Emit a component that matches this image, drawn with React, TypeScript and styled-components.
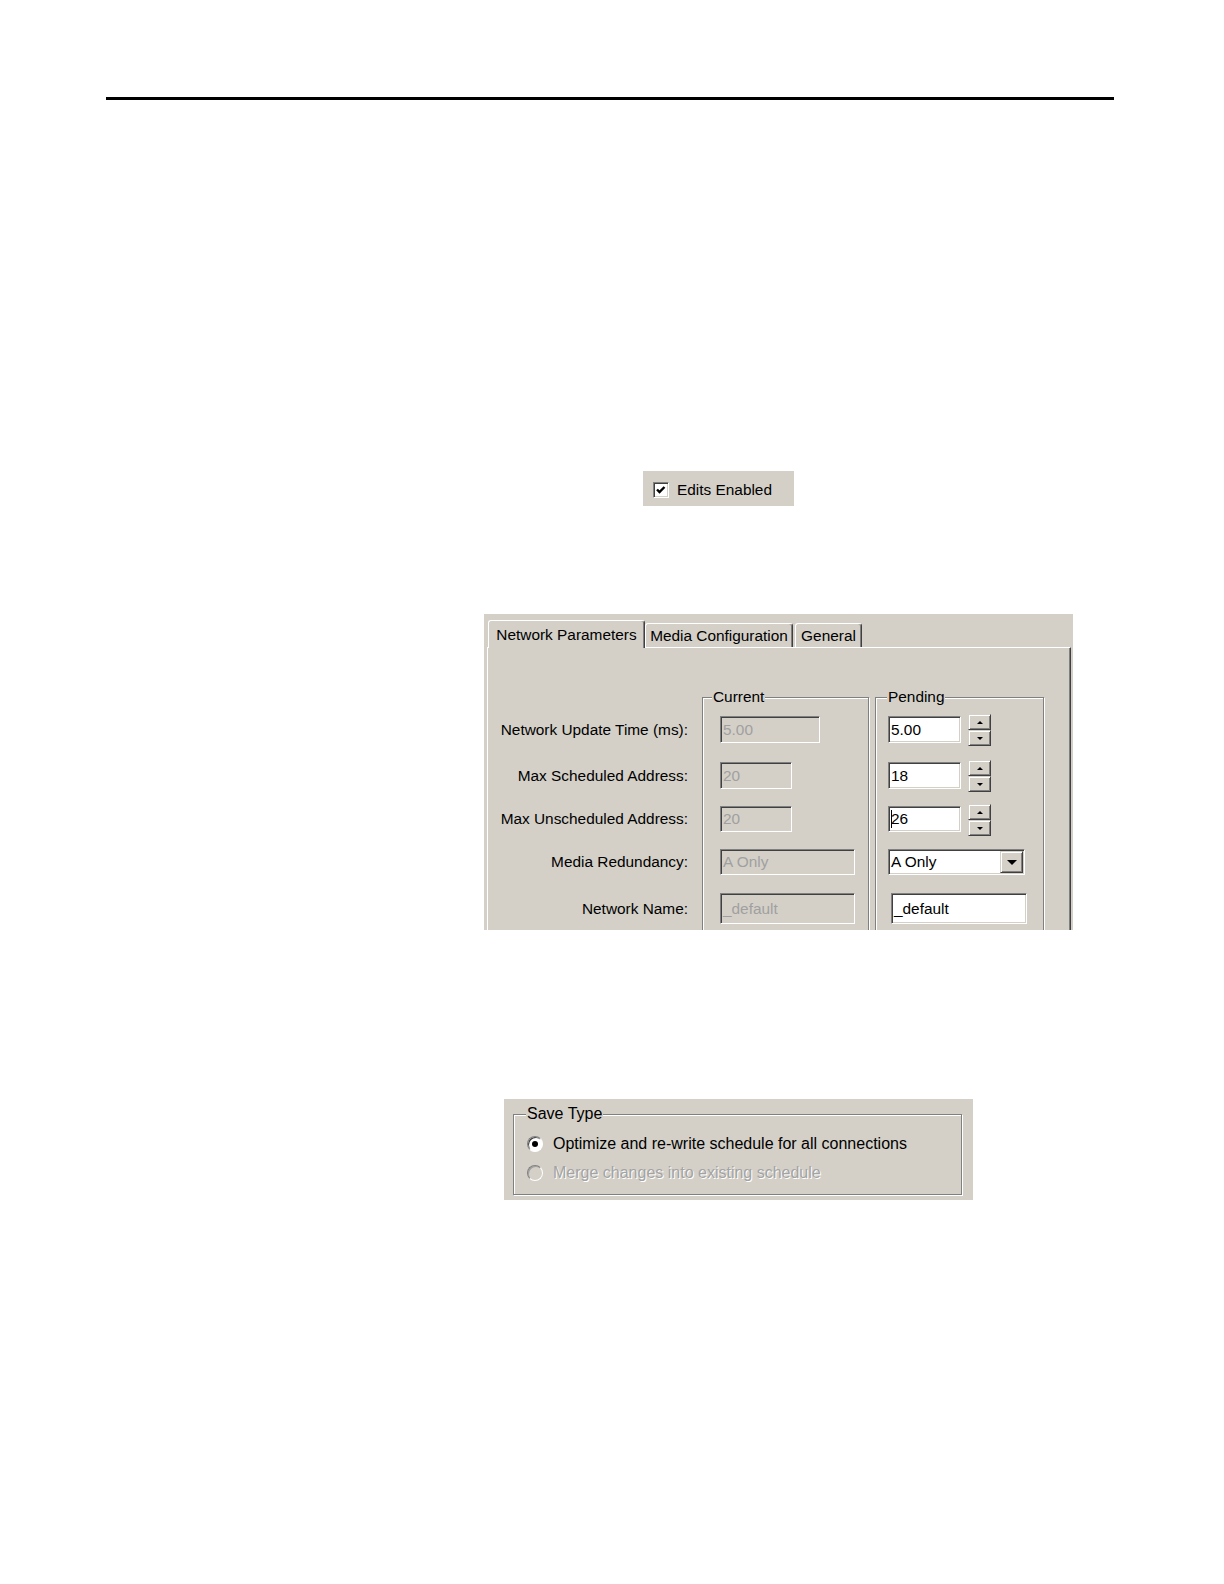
import styled, { createGlobalStyle } from "styled-components";

const GREY = "#d4d0c8";
const FONT = `"Liberation Sans", Arial, sans-serif`;

const GlobalStyle = createGlobalStyle`
  html, body {
    margin: 0;
    padding: 0;
    background: #fff;
  }
  body {
    font-family: ${FONT};
    color: #000;
  }
`;

const Page = styled.div`
  width: 1224px;
  min-height: 1584px;
  display: flex;
  flex-direction: column;
  align-items: flex-start;
`;

const Rule = styled.div`
  margin: 97px 0 0 106px;
  width: 1008px;
  height: 3px;
  background: #000;
`;

/* ---------- Edits Enabled ---------- */

const EditsPanel = styled.div`
  margin: 371px 0 0 643px;
  width: 151px;
  height: 35px;
  box-sizing: border-box;
  padding: 2px 0 0 10px;
  display: flex;
  align-items: center;
  gap: 8px;
  background: ${GREY};
  font-size: 15.4px;
`;

const CheckBox = styled.span`
  width: 16px;
  height: 16px;
  box-sizing: border-box;
  border: 1px solid;
  border-color: #808080 #fff #fff #808080;
  box-shadow: inset 1px 1px 0 #404040, inset -1px -1px 0 ${GREY};
  background: #fff;
  display: flex;
  align-items: center;
  justify-content: center;
`;

/* ---------- Tab dialog ---------- */

const Dialog = styled.div`
  margin: 108px 0 0 484px;
  width: 589px;
  height: 316px;
  box-sizing: border-box;
  padding: 6px 2px 0 3px;
  background: ${GREY};
  overflow: hidden;
  display: flex;
  flex-direction: column;
  font-size: 15.4px;
`;

const TabRow = styled.div`
  display: flex;
  align-items: flex-end;
  height: 27px;
  padding-left: 1px;
  position: relative;
  z-index: 1;
`;

const Tab = styled.div<{ $active?: boolean; $w: number; $ml?: number }>`
  box-sizing: border-box;
  width: ${(p) => p.$w}px;
  height: ${(p) => (p.$active ? 28 : 24)}px;
  margin-bottom: ${(p) => (p.$active ? -1 : 0)}px;
  margin-left: ${(p) => p.$ml ?? 0}px;
  padding-top: ${(p) => (p.$active ? 0 : 1)}px;
  display: flex;
  align-items: center;
  justify-content: center;
  background: ${GREY};
  border-top: 1px solid #fff;
  border-left: 1px solid #fff;
  border-right: 1px solid #404040;
  box-shadow: inset -1px 0 0 #808080;
  border-radius: 3px 3px 0 0;
  white-space: nowrap;
`;

const Panel = styled.div`
  flex: 1;
  display: flex;
  align-items: flex-start;
  border-top: 1px solid #fff;
  border-left: 1px solid #fff;
  border-right: 1px solid #404040;
  box-shadow: inset -1px 0 0 #808080;
  background: ${GREY};
`;

const LabelColumn = styled.div`
  width: 200px;
  padding-top: 68px;
  display: flex;
  flex-direction: column;
  align-items: flex-end;
`;

const GroupBox = styled.div<{ $w: number; $h: number; $mt?: number; $ml?: number }>`
  box-sizing: border-box;
  width: ${(p) => p.$w}px;
  height: ${(p) => p.$h}px;
  margin-top: ${(p) => p.$mt ?? 0}px;
  margin-left: ${(p) => p.$ml ?? 0}px;
  border: 1px solid #808080;
  box-shadow: inset 1px 1px 0 #fff, 1px 1px 0 #fff;
  display: flex;
  flex-direction: column;
  align-items: flex-start;
`;

const Legend = styled.div<{ $ml: number }>`
  margin: -10px 0 0 ${(p) => p.$ml}px;
  height: 18px;
  line-height: 18px;
  padding: 0 1px;
  background: ${GREY};
  white-space: nowrap;
`;

const Rows = styled.div<{ $pl: number }>`
  padding: 10px 0 0 ${(p) => p.$pl}px;
  display: flex;
  flex-direction: column;
`;

const Row = styled.div<{ $h: number }>`
  height: ${(p) => p.$h}px;
  display: flex;
  align-items: flex-start;
  gap: 7px;
`;

const Label = styled.div<{ $h: number }>`
  height: ${(p) => p.$h}px;
  display: flex;
  align-items: center;
  white-space: nowrap;
`;

const Field = styled.div<{ $w: number; $h: number; $disabled?: boolean; $ml?: number }>`
  box-sizing: border-box;
  width: ${(p) => p.$w}px;
  height: ${(p) => p.$h}px;
  margin-left: ${(p) => p.$ml ?? 0}px;
  border: 1px solid;
  border-color: #808080 #fff #fff #808080;
  box-shadow: inset 1px 1px 0 #404040, inset -1px -1px 0 ${GREY};
  background: ${(p) => (p.$disabled ? GREY : "#fff")};
  color: ${(p) => (p.$disabled ? "#a0a0a0" : "#000")};
  padding: 1px 1px 1px 2px;
  display: flex;
  align-items: center;
  white-space: nowrap;
  overflow: hidden;
`;

const FieldText = styled.span`
  flex: 1;
  display: flex;
  align-items: center;
`;

const Caret = styled.span`
  display: inline-block;
  width: 1px;
  height: 18px;
  margin-right: -1px;
  background: #000;
`;

const Spinner = styled.div`
  width: 23px;
  height: 32px;
  margin-top: -2px;
  display: flex;
  flex-direction: column;
`;

const RaisedButton = styled.div`
  box-sizing: border-box;
  flex: 1;
  display: flex;
  align-items: center;
  justify-content: center;
  background: ${GREY};
  border: 1px solid;
  border-color: ${GREY} #404040 #404040 ${GREY};
  box-shadow: inset 1px 1px 0 #fff, inset -1px -1px 0 #808080;
`;

const DropButton = styled(RaisedButton)`
  flex: 0 0 23px;
  align-self: stretch;
`;

const Arrow = styled.span<{ $dir: "up" | "down"; $size: number }>`
  width: 0;
  height: 0;
  border-left: ${(p) => p.$size}px solid transparent;
  border-right: ${(p) => p.$size}px solid transparent;
  ${(p) =>
    p.$dir === "up"
      ? `border-bottom: ${p.$size}px solid #000;`
      : `border-top: ${p.$size}px solid #000;`}
`;

/* ---------- Save Type ---------- */

const SavePanel = styled.div`
  margin: 169px 0 0 504px;
  width: 469px;
  height: 101px;
  box-sizing: border-box;
  padding: 15px 11px 5px 9px;
  background: ${GREY};
  font-size: 16px;
  display: flex;
`;

const RadioList = styled.div`
  padding: 6px 0 0 13px;
  display: flex;
  flex-direction: column;
`;

const RadioRow = styled.div<{ $disabled?: boolean }>`
  height: 29px;
  display: flex;
  align-items: center;
  gap: 10px;
  white-space: nowrap;
  color: ${(p) => (p.$disabled ? "#a3a3a3" : "#000")};
  text-shadow: ${(p) => (p.$disabled ? "1px 1px 0 #fff" : "none")};
`;

const Radio = styled.span<{ $disabled?: boolean }>`
  width: 16px;
  height: 16px;
  box-sizing: border-box;
  border-radius: 50%;
  border: 1px solid;
  border-color: #808080 #fff #fff #808080;
  box-shadow: inset 1px 1px 0 ${(p) => (p.$disabled ? "#a0a0a0" : "#404040")};
  background: ${(p) => (p.$disabled ? GREY : "#fff")};
  display: flex;
  align-items: center;
  justify-content: center;
`;

const RadioDot = styled.span`
  width: 6px;
  height: 6px;
  border-radius: 50%;
  background: #000;
`;

type Pending =
  | { kind: "spin"; value: string; caret?: boolean }
  | { kind: "select"; value: string }
  | { kind: "text"; value: string };

const ROWS: {
  label: string;
  h: number;
  ih: number;
  cur: { w: number; value: string };
  pend: Pending;
}[] = [
  { label: "Network Update Time (ms):", h: 46, ih: 27, cur: { w: 100, value: "5.00" }, pend: { kind: "spin", value: "5.00" } },
  { label: "Max Scheduled Address:", h: 44, ih: 27, cur: { w: 72, value: "20" }, pend: { kind: "spin", value: "18" } },
  { label: "Max Unscheduled Address:", h: 43, ih: 26, cur: { w: 72, value: "20" }, pend: { kind: "spin", value: "26", caret: true } },
  { label: "Media Redundancy:", h: 44, ih: 26, cur: { w: 135, value: "A Only" }, pend: { kind: "select", value: "A Only" } },
  { label: "Network Name:", h: 44, ih: 31, cur: { w: 135, value: "_default" }, pend: { kind: "text", value: "_default" } },
];

function PendingControl({ pend, ih }: { pend: Pending; ih: number }) {
  if (pend.kind === "spin") {
    return (
      <>
        <Field $w={73} $h={ih}>
          <FieldText>
            {pend.caret && <Caret />}
            {pend.value}
          </FieldText>
        </Field>
        <Spinner>
          <RaisedButton>
            <Arrow $dir="up" $size={3} />
          </RaisedButton>
          <RaisedButton>
            <Arrow $dir="down" $size={3} />
          </RaisedButton>
        </Spinner>
      </>
    );
  }
  if (pend.kind === "select") {
    return (
      <Field $w={137} $h={ih}>
        <FieldText>{pend.value}</FieldText>
        <DropButton>
          <Arrow $dir="down" $size={5} />
        </DropButton>
      </Field>
    );
  }
  return (
    <Field $w={136} $h={ih} $ml={3}>
      <FieldText>{pend.value}</FieldText>
    </Field>
  );
}

export default function App() {
  return (
    <>
      <GlobalStyle />
      <Page>
        <Rule />

        <EditsPanel>
          <CheckBox>
            <svg width="12" height="12" viewBox="0 0 12 12">
              <path d="M2 5.5 L4.5 8 L9.5 3" fill="none" stroke="#000" strokeWidth="2.4" />
            </svg>
          </CheckBox>
          <span>Edits Enabled</span>
        </EditsPanel>

        <Dialog>
          <TabRow>
            <Tab $active $w={157}>Network Parameters</Tab>
            <Tab $w={148}>Media Configuration</Tab>
            <Tab $w={67} $ml={2}>General</Tab>
          </TabRow>
          <Panel>
            <LabelColumn>
              {ROWS.map((r) => (
                <Row key={r.label} $h={r.h}>
                  <Label $h={r.ih}>{r.label}</Label>
                </Row>
              ))}
            </LabelColumn>

            <GroupBox $w={167} $h={320} $mt={49} $ml={14}>
              <Legend $ml={9}>Current</Legend>
              <Rows $pl={17}>
                {ROWS.map((r) => (
                  <Row key={r.label} $h={r.h}>
                    <Field $w={r.cur.w} $h={r.ih} $disabled>
                      <FieldText>{r.cur.value}</FieldText>
                    </Field>
                  </Row>
                ))}
              </Rows>
            </GroupBox>

            <GroupBox $w={169} $h={320} $mt={49} $ml={6}>
              <Legend $ml={11}>Pending</Legend>
              <Rows $pl={12}>
                {ROWS.map((r) => (
                  <Row key={r.label} $h={r.h}>
                    <PendingControl pend={r.pend} ih={r.ih} />
                  </Row>
                ))}
              </Rows>
            </GroupBox>
          </Panel>
        </Dialog>

        <SavePanel>
          <GroupBox $w={449} $h={81}>
            <Legend $ml={12}>Save Type</Legend>
            <RadioList>
              <RadioRow>
                <Radio>
                  <RadioDot />
                </Radio>
                Optimize and re-write schedule for all connections
              </RadioRow>
              <RadioRow $disabled>
                <Radio $disabled />
                Merge changes into existing schedule
              </RadioRow>
            </RadioList>
          </GroupBox>
        </SavePanel>
      </Page>
    </>
  );
}
